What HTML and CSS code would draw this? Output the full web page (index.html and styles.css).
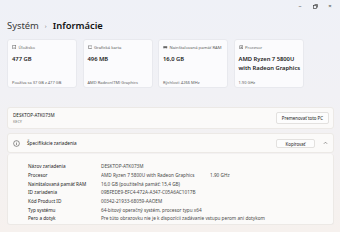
FILE: index.html
```html
<!DOCTYPE html>
<html lang="sk">
<head>
<meta charset="utf-8">
<link rel="stylesheet" href="styles.css">
</head>
<body>
<div class="window">
  <div class="titlebar">
    <span class="ctl">&#8211;</span>
    <span class="ctl"><svg width="5" height="5" viewBox="0 0 5 5"><rect x="0.5" y="1.5" width="3" height="3" fill="none" stroke="#444" stroke-width="0.7"/><path d="M1.5 0.5h3v3" fill="none" stroke="#444" stroke-width="0.7"/></svg></span>
    <span class="ctl">&#215;</span>
  </div>
  <h1 class="crumbs"><span class="crumb">Systém</span><span class="sep">›</span><span class="cur">Informácie</span></h1>

  <div class="cards">
    <div class="card">
      <div class="clabel"><svg class="ic" viewBox="0 0 6 6"><rect x="1" y="0.7" width="4" height="4.6" fill="none" stroke="#666" stroke-width="0.7"/><line x1="1.8" y1="3.8" x2="4.2" y2="3.8" stroke="#666" stroke-width="0.6"/></svg>Úložisko</div>
      <div class="cval">477 GB</div>
      <div class="csub">Používa sa 37 GB z 477 GB</div>
    </div>
    <div class="card">
      <div class="clabel"><svg class="ic" viewBox="0 0 6 6"><rect x="0.6" y="1.2" width="4.8" height="3.2" fill="none" stroke="#666" stroke-width="0.7"/><line x1="2" y1="5.3" x2="4" y2="5.3" stroke="#666" stroke-width="0.6"/></svg>Grafická karta</div>
      <div class="cval">496 MB</div>
      <div class="csub">AMD Radeon(TM) Graphics</div>
    </div>
    <div class="card">
      <div class="clabel"><svg class="ic" viewBox="0 0 6 6"><rect x="0.4" y="1.6" width="5.2" height="2.6" fill="#666"/><line x1="1.2" y1="4.2" x2="1.2" y2="5" stroke="#666" stroke-width="0.5"/><line x1="4.8" y1="4.2" x2="4.8" y2="5" stroke="#666" stroke-width="0.5"/></svg>Nainštalovaná pamäť RAM</div>
      <div class="cval">16,0 GB</div>
      <div class="csub">Rýchlosť: 4266 MHz</div>
    </div>
    <div class="card">
      <div class="clabel"><svg class="ic" viewBox="0 0 6 6"><rect x="1" y="1" width="4" height="4" fill="none" stroke="#666" stroke-width="0.7"/><rect x="2.2" y="2.2" width="1.6" height="1.6" fill="#666"/></svg>Procesor</div>
      <div class="cval nowrap">AMD Ryzen 7 5800U<br>with Radeon Graphics</div>
      <div class="csub">1.90 GHz</div>
    </div>
  </div>

  <div class="panel device">
    <div class="dname">
      <div class="dtitle">DESKTOP-ATK073M</div>
      <div class="dsub">KECY</div>
    </div>
    <button class="btn">Premenovať toto PC</button>
  </div>

  <div class="panel spechead">
    <div class="shleft">
      <svg class="info" viewBox="0 0 8 8"><circle cx="4" cy="4" r="3.3" fill="none" stroke="#333" stroke-width="0.6"/><line x1="4" y1="3.5" x2="4" y2="5.8" stroke="#333" stroke-width="0.6"/><circle cx="4" cy="2.4" r="0.4" fill="#333"/></svg>
      <span>Špecifikácie zariadenia</span>
    </div>
    <div class="shright">
      <button class="btn small">Kopírovať</button>
      <svg class="chev" viewBox="0 0 6 4"><path d="M1 3L3 1L5 3" fill="none" stroke="#444" stroke-width="0.6"/></svg>
    </div>
  </div>

  <div class="panel specbody">
    <div class="row"><span class="k">Názov zariadenia</span><span class="v">DESKTOP-ATK073M</span></div>
    <div class="row"><span class="k">Procesor</span><span class="v">AMD Ryzen 7 5800U with Radeon Graphics</span><span class="v2">1.90 GHz</span></div>
    <div class="row"><span class="k">Nainštalovaná pamäť RAM</span><span class="v">16,0 GB (použiteľná pamäť: 15,4 GB)</span></div>
    <div class="row"><span class="k">ID zariadenia</span><span class="v">09BFEDE9-EFC4-472A-A347-C05A6AC1017B</span></div>
    <div class="row"><span class="k">Kód Product ID</span><span class="v">00342-21933-68059-AAOEM</span></div>
    <div class="row"><span class="k">Typ systému</span><span class="v">64-bitový operačný systém, procesor typu x64</span></div>
    <div class="row"><span class="k">Pero a dotyk</span><span class="v">Pre túto obrazovku nie je k dispozícii zadávanie vstupu perom ani dotykom</span></div>
  </div>
</div>
</body>
</html>
```
FILE: styles.css
```css
html, body {
  margin: 0;
  padding: 0;
}
body {
  width: 340px;
  height: 232px;
  overflow: hidden;
  font-family: "Noto Sans", "Open Sans", sans-serif;
  color: #1b1b1b;
  background: linear-gradient(180deg, #eff1f7 0%, #f1f1f5 40%, #f6f1ee 100%);
}
.window {
  padding: 0 6px 0 7px;
}
.titlebar {
  height: 12px;
  display: flex;
  justify-content: flex-end;
  align-items: center;
  gap: 9px;
  padding-right: 1px;
  font-size: 6px;
  color: #444;
}
.ctl {
  display: flex;
  align-items: center;
  width: 6px;
  justify-content: center;
}
.crumbs {
  margin: 6px 0 0 0;
  height: 16px;
  display: flex;
  align-items: center;
  font-size: 9.4px;
  font-weight: 400;
  line-height: 16px;
}
.crumb {
  color: #3a3a3a;
}
.sep {
  font-size: 6px;
  color: #777;
  margin: 0 6px;
}
.cur {
  font-weight: 600;
  color: #111;
}
.cards {
  margin-top: 5px;
  display: grid;
  grid-template-columns: repeat(4, 70px);
  gap: 5.5px;
}
.card {
  height: 49px;
  box-sizing: border-box;
  background: #fbfbfd;
  border: 0.5px solid #e8e9ee;
  border-radius: 3px;
  padding: 4px 4px 0 4px;
  display: flex;
  flex-direction: column;
}
.clabel {
  display: flex;
  align-items: center;
  gap: 2px;
  font-size: 4.2px;
  color: #606060;
  height: 6px;
  white-space: nowrap;
}
.ic {
  width: 4.5px;
  height: 4.5px;
}
.cval {
  margin-top: 5px;
  font-size: 5.8px;
  font-weight: 600;
  line-height: 9px;
  height: 18px;
  color: #1a1a1a;
}
.nowrap {
  white-space: nowrap;
}
.csub {
  margin-top: 7px;
  font-size: 4px;
  color: #606060;
  white-space: nowrap;
}
.panel {
  box-sizing: border-box;
  width: 327px;
  background: #fbfaf9;
  border: 0.5px solid #ece9e6;
  border-radius: 3px;
}
.device {
  margin-top: 19px;
  height: 22px;
  display: flex;
  align-items: center;
  justify-content: space-between;
  padding: 0 4px 0 5px;
}
.dtitle {
  font-size: 4.6px;
  color: #222;
  line-height: 7px;
}
.dsub {
  font-size: 3.8px;
  color: #777;
  line-height: 5px;
}
.btn {
  font-family: inherit;
  font-size: 4.4px;
  color: #222;
  background: #fdfdfd;
  border: 0.5px solid #e3e1df;
  border-radius: 2px;
  height: 12px;
  padding: 0 5px;
  line-height: 11px;
}
.btn.small {
  width: 39px;
  height: 9px;
  line-height: 8px;
}
.spechead {
  margin-top: 4px;
  height: 20px;
  display: flex;
  align-items: center;
  justify-content: space-between;
  padding: 0 5px 0 5px;
}
.shleft {
  display: flex;
  align-items: center;
  gap: 7px;
  font-size: 4.7px;
  color: #222;
}
.info {
  width: 7px;
  height: 7px;
}
.shright {
  display: flex;
  align-items: center;
  gap: 8px;
}
.chev {
  width: 5px;
  height: 4px;
}
.specbody {
  margin-top: 1px;
  height: 71px;
  padding: 8px 0 0 20px;
  border-top: none;
}
.row {
  display: flex;
  height: 8.7px;
  align-items: center;
  font-size: 4.7px;
  white-space: nowrap;
}
.k {
  width: 73px;
  color: #1e1e1e;
}
.v {
  color: #4a4a4a;
}
.row .v:not(:last-child) {
  width: 109px;
  overflow: hidden;
}
.v2 {
  color: #4a4a4a;
}
```
